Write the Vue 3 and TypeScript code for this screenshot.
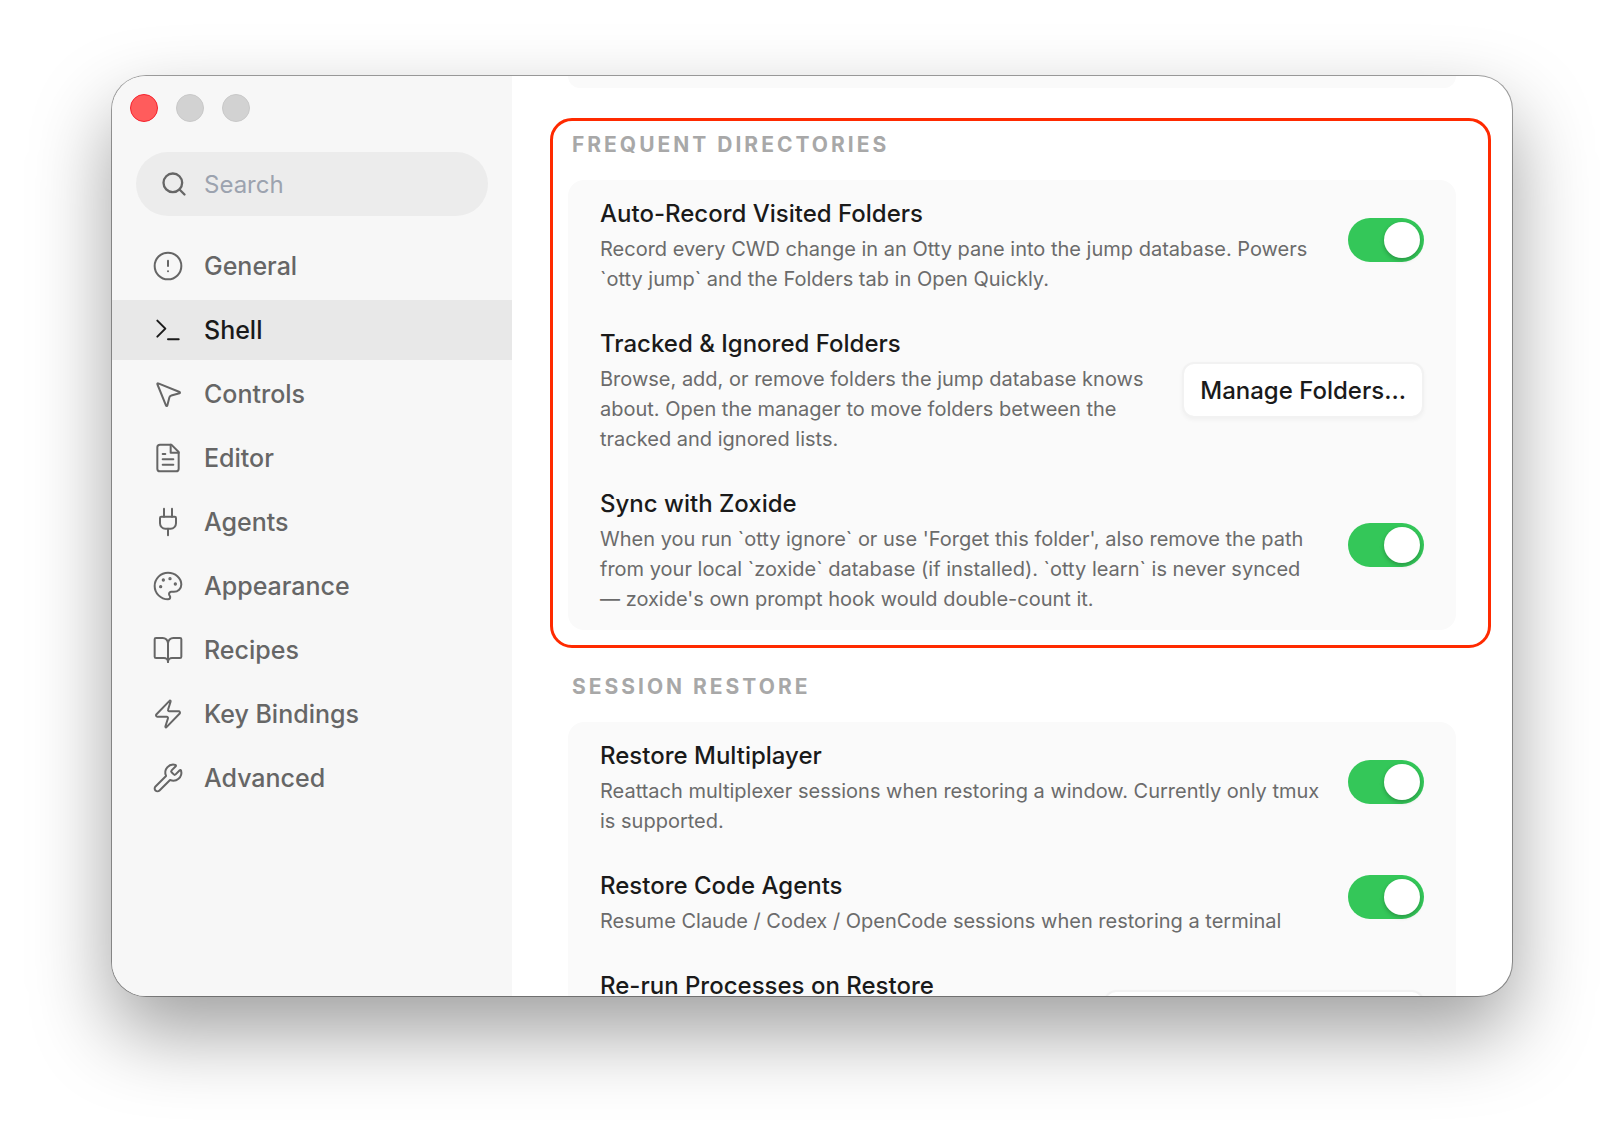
<script setup lang="ts">
import { ref } from 'vue'

interface NavItem {
  id: string
  label: string
  paths: string[]
  dots?: [number, number][]
}

interface SettingRow {
  id: string
  title: string
  description?: string
  control: 'toggle' | 'button' | 'select'
  action?: string
}

interface Section {
  title: string
  highlighted: boolean
  rows: SettingRow[]
}

const navItems: NavItem[] = [
  {
    id: 'general',
    label: 'General',
    paths: ['M22 12a10 10 0 1 1-20 0 10 10 0 0 1 20 0Z', 'M12 8v4', 'M12 16h.01'],
  },
  { id: 'shell', label: 'Shell', paths: ['m4 17 6-6-6-6', 'M12 19h8'] },
  {
    id: 'controls',
    label: 'Controls',
    paths: [
      'M4.037 4.688a.495.495 0 0 1 .651-.651l16 6.5a.5.5 0 0 1-.063.947l-6.124 1.58a2 2 0 0 0-1.438 1.435l-1.579 6.126a.5.5 0 0 1-.947.063z',
    ],
  },
  {
    id: 'editor',
    label: 'Editor',
    paths: [
      'M14.5 2H6a2 2 0 0 0-2 2v16a2 2 0 0 0 2 2h12a2 2 0 0 0 2-2V7.5L14.5 2z',
      'M14 2v6h6',
      'M10 9H8',
      'M16 13H8',
      'M16 17H8',
    ],
  },
  {
    id: 'agents',
    label: 'Agents',
    paths: [
      'M12 22v-5',
      'M15 8V2',
      'M17 8a1 1 0 0 1 1 1v4a4 4 0 0 1-4 4h-4a4 4 0 0 1-4-4V9a1 1 0 0 1 1-1z',
      'M9 8V2',
    ],
  },
  {
    id: 'appearance',
    label: 'Appearance',
    paths: [
      'M12 2C6.5 2 2 6.5 2 12s4.5 10 10 10c.926 0 1.648-.746 1.648-1.688 0-.437-.18-.835-.437-1.125-.29-.289-.438-.652-.438-1.125a1.64 1.64 0 0 1 1.668-1.668h1.996c3.051 0 5.555-2.503 5.555-5.554C21.965 6.012 17.461 2 12 2z',
    ],
    dots: [
      [13.5, 6.5],
      [17.5, 10.5],
      [6.5, 12.5],
      [8.5, 7.5],
    ],
  },
  {
    id: 'recipes',
    label: 'Recipes',
    paths: [
      'M12 7v14',
      'M3 18a1 1 0 0 1-1-1V4a1 1 0 0 1 1-1h5a4 4 0 0 1 4 4 4 4 0 0 1 4-4h5a1 1 0 0 1 1 1v13a1 1 0 0 1-1 1h-6a3 3 0 0 0-3 3 3 3 0 0 0-3-3z',
    ],
  },
  {
    id: 'key-bindings',
    label: 'Key Bindings',
    paths: [
      'M4 14a1 1 0 0 1-.78-1.63l9.9-10.2a.5.5 0 0 1 .86.46l-1.92 6.02A1 1 0 0 0 13 10h7a1 1 0 0 1 .78 1.63l-9.9 10.2a.5.5 0 0 1-.86-.46l1.92-6.02A1 1 0 0 0 11 14z',
    ],
  },
  {
    id: 'advanced',
    label: 'Advanced',
    paths: [
      'M14.7 6.3a1 1 0 0 0 0 1.4l1.6 1.6a1 1 0 0 0 1.4 0l3.106-3.105c.32-.322.863-.22.983.218a6 6 0 0 1-8.259 7.057l-7.91 7.91a1 1 0 0 1-2.999-3l7.91-7.91a6 6 0 0 1 7.057-8.259c.438.12.54.662.219.984z',
    ],
  },
]

const sections: Section[] = [
  {
    title: 'Frequent Directories',
    highlighted: true,
    rows: [
      {
        id: 'auto-record',
        title: 'Auto-Record Visited Folders',
        description:
          'Record every CWD change in an Otty pane into the jump database. Powers `otty jump` and the Folders tab in Open Quickly.',
        control: 'toggle',
      },
      {
        id: 'tracked',
        title: 'Tracked & Ignored Folders',
        description:
          'Browse, add, or remove folders the jump database knows about. Open the manager to move folders between the tracked and ignored lists.',
        control: 'button',
        action: 'Manage Folders...',
      },
      {
        id: 'zoxide',
        title: 'Sync with Zoxide',
        description:
          "When you run `otty ignore` or use 'Forget this folder', also remove the path from your local `zoxide` database (if installed). `otty learn` is never synced — zoxide's own prompt hook would double-count it.",
        control: 'toggle',
      },
    ],
  },
  {
    title: 'Session Restore',
    highlighted: false,
    rows: [
      {
        id: 'multiplayer',
        title: 'Restore Multiplayer',
        description:
          'Reattach multiplexer sessions when restoring a window. Currently only tmux is supported.',
        control: 'toggle',
      },
      {
        id: 'code-agents',
        title: 'Restore Code Agents',
        description: 'Resume Claude / Codex / OpenCode sessions when restoring a terminal',
        control: 'toggle',
      },
      { id: 'rerun', title: 'Re-run Processes on Restore', control: 'select' },
    ],
  },
]

const active = ref('shell')
const query = ref('')
const enabled = ref<Record<string, boolean>>({
  'auto-record': true,
  zoxide: true,
  multiplayer: true,
  'code-agents': true,
})
</script>

<template>
  <div class="desktop">
    <div class="window">
      <aside class="sidebar">
        <div class="lights">
          <button type="button" class="light close" aria-label="Close"></button>
          <button type="button" class="light" aria-label="Minimize" disabled></button>
          <button type="button" class="light" aria-label="Zoom" disabled></button>
        </div>

        <label class="search">
          <svg class="search-icon" viewBox="0 0 24 24" aria-hidden="true">
            <circle cx="11" cy="11" r="8" />
            <path d="m21 21-4.3-4.3" />
          </svg>
          <input v-model="query" type="text" placeholder="Search" aria-label="Search" />
        </label>

        <nav class="nav">
          <a
            v-for="item in navItems"
            :key="item.id"
            :href="'#' + item.id"
            class="nav-item"
            :class="{ active: item.id === active }"
            @click.prevent="active = item.id"
          >
            <svg class="nav-icon" viewBox="0 0 24 24" aria-hidden="true">
              <path v-for="d in item.paths" :key="d" :d="d" />
              <circle
                v-for="[cx, cy] in item.dots ?? []"
                :key="cx"
                class="dot"
                :cx="cx"
                :cy="cy"
                r="0.5"
              />
            </svg>
            <span>{{ item.label }}</span>
          </a>
        </nav>
      </aside>

      <main class="pane">
        <div class="card-tail"></div>
        <section
          v-for="section in sections"
          :key="section.title"
          class="section"
          :class="{ highlighted: section.highlighted }"
        >
          <h2 class="section-title">{{ section.title }}</h2>
          <div class="card">
            <div v-for="row in section.rows" :key="row.id" class="row">
              <div class="copy">
                <label v-if="row.control !== 'button'" class="row-title" :for="row.id">{{
                  row.title
                }}</label>
                <h3 v-else class="row-title">{{ row.title }}</h3>
                <p v-if="row.description" class="row-text">{{ row.description }}</p>
              </div>
              <input
                v-if="row.control === 'toggle'"
                :id="row.id"
                v-model="enabled[row.id]"
                class="toggle"
                type="checkbox"
                role="switch"
              />
              <button v-else-if="row.control === 'button'" type="button" class="push">
                {{ row.action }}
              </button>
              <select v-else :id="row.id" class="push picker">
                <option value=""></option>
              </select>
            </div>
          </div>
        </section>
      </main>
    </div>
  </div>
</template>

<style>
body {
  background: #fff;
}
</style>

<style scoped>
.desktop,
.desktop * {
  box-sizing: border-box;
}

.desktop {
  height: 100vh;
  min-height: 600px;
  padding: 76px 112px 148px;
  overflow: hidden;
  font-family: Inter, 'Noto Sans', sans-serif;
  color: #1a1a1a;
  background: #fff;
}

.window {
  display: flex;
  height: 100%;
  border-radius: 34px;
  overflow: hidden;
  background: #fff;
  box-shadow:
    0 0 0 1px rgba(0, 0, 0, 0.36),
    0 36px 80px rgba(0, 0, 0, 0.38);
}

.sidebar {
  flex: 0 0 400px;
  min-width: 0;
  background: #f7f7f7;
}

.lights {
  display: flex;
  gap: 18px;
  padding: 18px 18px 0;
}

.light {
  width: 28px;
  height: 28px;
  padding: 0;
  border: 1px solid #c8c8c8;
  border-radius: 50%;
  background: #d2d2d2;
}

.light.close {
  border-color: #f5222d;
  background: #ff5c5c;
}

.search {
  display: flex;
  align-items: center;
  gap: 16px;
  height: 64px;
  margin: 30px 24px 20px;
  padding: 0 24px;
  border-radius: 32px;
  background: #ececec;
}

.search-icon {
  flex: none;
  width: 28px;
  height: 28px;
  fill: none;
  stroke: #666;
  stroke-width: 2;
  stroke-linecap: round;
}

.search input {
  flex: 1;
  width: 100%;
  min-width: 0;
  padding: 0;
  border: 0;
  outline: 0;
  background: transparent;
  font: inherit;
  font-size: 24px;
  color: #1a1a1a;
}

.search input::placeholder {
  color: #9ca3af;
  opacity: 1;
}

.nav {
  display: flex;
  flex-direction: column;
  gap: 4px;
}

.nav-item {
  display: flex;
  align-items: center;
  gap: 20px;
  height: 60px;
  padding: 0 40px;
  font-size: 25px;
  font-weight: 500;
  color: #666;
  text-decoration: none;
}

.nav-item.active {
  background: #e8e8e8;
  color: #1a1a1a;
}

.nav-icon {
  flex: none;
  width: 32px;
  height: 32px;
  fill: none;
  stroke: currentColor;
  stroke-width: 1.5;
  stroke-linecap: round;
  stroke-linejoin: round;
}

.dot {
  fill: currentColor;
}

.pane {
  flex: 1;
  min-width: 0;
  padding: 0 56px;
  overflow: hidden;
}

.card-tail {
  height: 12px;
  border-radius: 0 0 16px 16px;
  background: #fafafa;
}

.section {
  position: relative;
  margin-top: 40px;
}

.section.highlighted::after {
  content: '';
  position: absolute;
  inset: -10px -35px -18px -18px;
  border: 3px solid #ff2a00;
  border-radius: 22px;
  pointer-events: none;
}

.section-title {
  margin: 0 0 18px;
  padding: 0 4px;
  font-size: 21px;
  line-height: 34px;
  font-weight: 700;
  letter-spacing: 3px;
  text-transform: uppercase;
  color: #a8a8a8;
}

.card {
  border-radius: 16px;
  background: #fafafa;
}

.row {
  display: flex;
  align-items: center;
  gap: 28px;
  min-height: 100px;
  padding: 16px 32px;
}

.copy {
  flex: 1;
  min-width: 0;
  align-self: flex-start;
}

.row-title {
  display: block;
  margin: 0 0 2px;
  font-size: 24px;
  line-height: 36px;
  font-weight: 500;
}

.row-text {
  margin: 0;
  font-size: 20px;
  line-height: 30px;
  color: #6b6b6b;
}

.toggle {
  appearance: none;
  flex: none;
  display: flex;
  width: 76px;
  height: 44px;
  margin: 0 0 10px;
  padding: 4px;
  border-radius: 22px;
  background: #d1d1d6;
}

.toggle::before {
  content: '';
  width: 36px;
  height: 36px;
  border-radius: 50%;
  background: #fff;
  box-shadow: 0 2px 4px rgba(0, 0, 0, 0.25);
}

.toggle:checked {
  justify-content: flex-end;
  background: #34c759;
}

.push {
  flex: none;
  height: 56px;
  padding: 0 16px;
  border: 2px solid #f2f2f2;
  border-radius: 12px;
  background: #fff;
  background-clip: padding-box;
  box-shadow: 0 2px 4px rgba(0, 0, 0, 0.04);
  font: inherit;
  font-size: 24px;
  font-weight: 500;
  color: #1a1a1a;
}

.picker {
  appearance: none;
  width: 320px;
  margin: 22px 0;
}
</style>
